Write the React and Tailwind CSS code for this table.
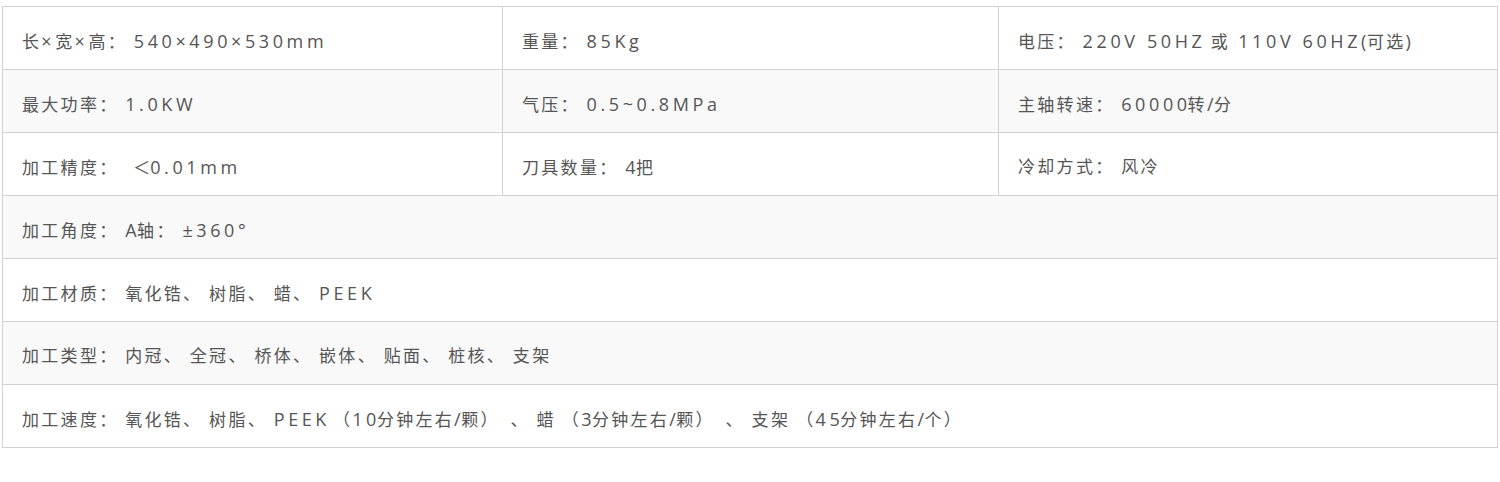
const PUNCT = "：、（）＜";

function segType(ch) {
  if (PUNCT.includes(ch)) return "p";
  if (ch === "×") return "x";
  if (/[\u3000-\u9fff\uff00-\uffef]/.test(ch)) return "c";
  return "l";
}

function Punct({ ch }) {
  if (ch === "（") return <span className="text-[17px] ml-[6px] tracking-[2.3px]">{ch}</span>;
  if (ch === "＜") return <span className="text-[17px] ml-[8px] tracking-[0px]">{ch}</span>;
  if (ch === "）") return <span className="text-[17px] tracking-[13px]">{ch}</span>;
  return <span className="text-[17px] tracking-[9px]">{ch}</span>;
}

function Rich({ text }) {
  const segs = [];
  for (const ch of text) {
    const t = segType(ch);
    const last = segs[segs.length - 1];
    if (last && last.t === t && t !== "x" && t !== "p") last.s += ch;
    else segs.push({ t, s: ch });
  }
  return (
    <span className="whitespace-pre">
      {segs.map((g, i) => {
        if (g.t === "p") return <Punct key={i} ch={g.s} />;
        if (g.t === "c")
          return (
            <span key={i} className="text-[17px] tracking-[2.3px]">
              {g.s}
            </span>
          );
        if (g.t === "x")
          return (
            <span key={i} className="text-[18px] tracking-[3.6px]">
              {g.s}
            </span>
          );
        const next = segs[i + 1];
        const tight = next && (next.t === "c" || next.t === "p");
        if (tight) {
          return (
            <span key={i} className="text-[18px]">
              <span className="tracking-[3.6px]">{g.s.slice(0, -1)}</span>
              <span className="tracking-[0.5px]">{g.s.slice(-1)}</span>
            </span>
          );
        }
        return (
          <span key={i} className="text-[18px] tracking-[3.6px]">
            {g.s}
          </span>
        );
      })}
    </span>
  );
}

export default function App() {
  const rows3 = [
    ["长×宽×高：540×490×530mm", "重量：85Kg", "电压：220V 50HZ 或 110V 60HZ(可选)"],
    ["最大功率：1.0KW", "气压：0.5~0.8MPa", "主轴转速：60000转/分"],
    ["加工精度：＜0.01mm", "刀具数量：4把", "冷却方式：风冷"],
  ];
  const rows1 = [
    "加工角度：A轴：±360°",
    "加工材质：氧化锆、树脂、蜡、PEEK",
    "加工类型：内冠、全冠、桥体、嵌体、贴面、桩核、支架",
    "加工速度：氧化锆、树脂、PEEK（10分钟左右/颗）、蜡（3分钟左右/颗）、支架（45分钟左右/个）",
  ];
  const font = { fontFamily: '"Open Sans", "Noto Sans CJK SC", sans-serif' };
  return (
    <div className="w-[1500px] h-[482px] bg-white pt-[6px] pl-[2px]" style={font}>
      <div className="w-[1496px] border-l border-t border-[#d2d2d2] text-[#555555] [text-spacing-trim:space-all]">
        {rows3.map((r, i) => (
          <div
            key={i}
            className={`grid grid-cols-[500px_496px_1fr] h-[63px] border-b border-[#d2d2d2] ${i % 2 === 1 ? "bg-[#f9f9f9]" : "bg-white"}`}
          >
            {r.map((c, j) => (
              <div key={j} className="flex items-center pl-[19px] pt-[6px] border-r border-[#d2d2d2]">
                <Rich text={c} />
              </div>
            ))}
          </div>
        ))}
        {rows1.map((c, i) => (
          <div
            key={i}
            className={`flex items-center h-[63px] pl-[19px] pt-[6px] border-b border-r border-[#d2d2d2] ${i % 2 === 0 ? "bg-[#f9f9f9]" : "bg-white"}`}
          >
            <Rich text={c} />
          </div>
        ))}
      </div>
    </div>
  );
}
